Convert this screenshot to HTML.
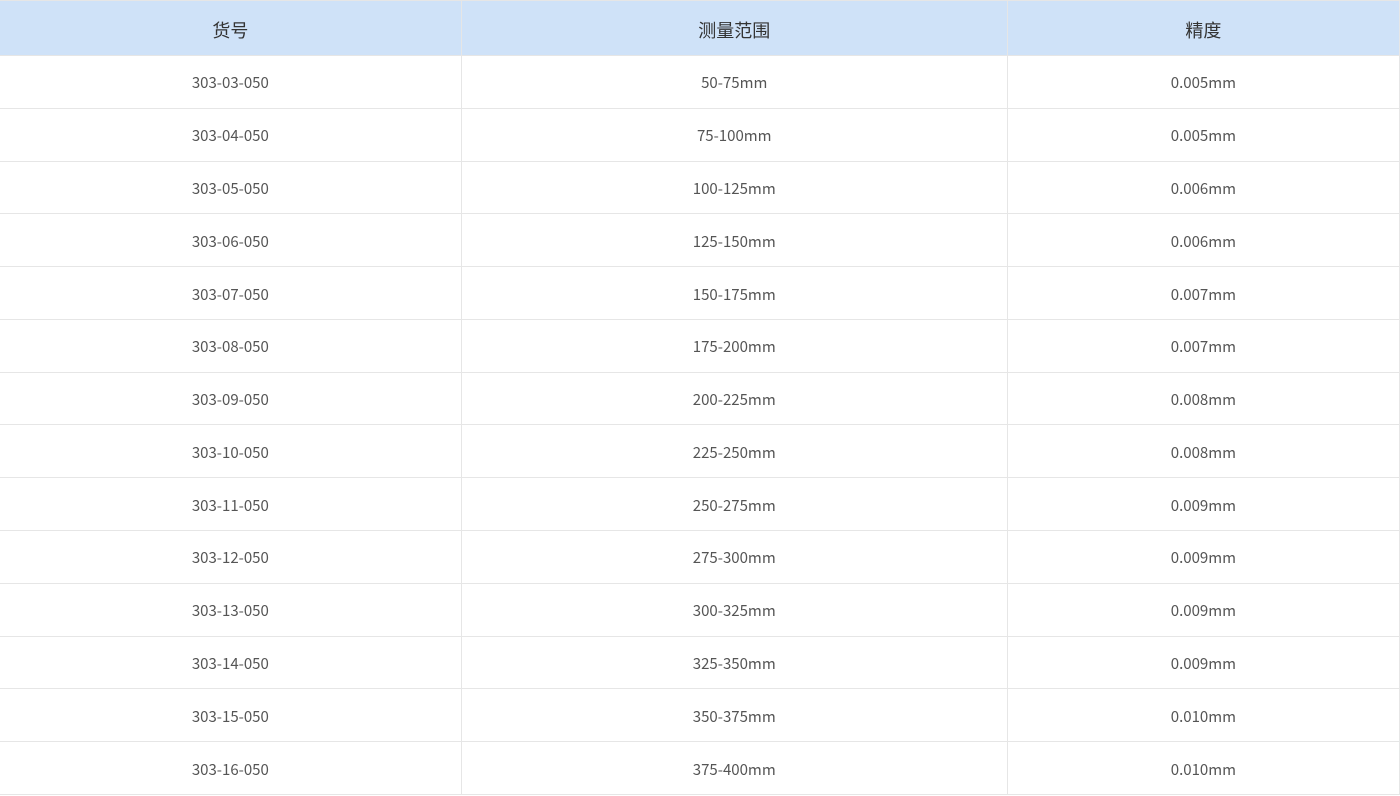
<!DOCTYPE html>
<html><head><meta charset="utf-8"><style>
body{margin:0;width:1400px;height:796px;background:#fff;overflow:hidden;font-family:"Noto Sans CJK SC","Liberation Sans",sans-serif;}
table{position:absolute;left:0;top:0;width:1400px;border-collapse:collapse;table-layout:fixed;}
td,th{border:1px solid #e6e6e6;text-align:center;padding:3px 0 0 0;color:#555;font-size:15px;font-weight:normal;height:48.79px;line-height:20px;}
th{background:#cfe2f8;color:#333;font-size:18px;height:51px;padding:3px 0 0 0;}
tr td:first-child,tr th:first-child{border-left:none;}
</style></head><body>
<table>
<colgroup><col style="width:461px"><col style="width:546px"><col style="width:392px"></colgroup>
<tr><th>货号</th><th>测量范围</th><th>精度</th></tr>
<tr><td>303-03-050</td><td>50-75mm</td><td>0.005mm</td></tr>
<tr><td>303-04-050</td><td>75-100mm</td><td>0.005mm</td></tr>
<tr><td>303-05-050</td><td>100-125mm</td><td>0.006mm</td></tr>
<tr><td>303-06-050</td><td>125-150mm</td><td>0.006mm</td></tr>
<tr><td>303-07-050</td><td>150-175mm</td><td>0.007mm</td></tr>
<tr><td>303-08-050</td><td>175-200mm</td><td>0.007mm</td></tr>
<tr><td>303-09-050</td><td>200-225mm</td><td>0.008mm</td></tr>
<tr><td>303-10-050</td><td>225-250mm</td><td>0.008mm</td></tr>
<tr><td>303-11-050</td><td>250-275mm</td><td>0.009mm</td></tr>
<tr><td>303-12-050</td><td>275-300mm</td><td>0.009mm</td></tr>
<tr><td>303-13-050</td><td>300-325mm</td><td>0.009mm</td></tr>
<tr><td>303-14-050</td><td>325-350mm</td><td>0.009mm</td></tr>
<tr><td>303-15-050</td><td>350-375mm</td><td>0.010mm</td></tr>
<tr><td>303-16-050</td><td>375-400mm</td><td>0.010mm</td></tr>
</table>
</body></html>
